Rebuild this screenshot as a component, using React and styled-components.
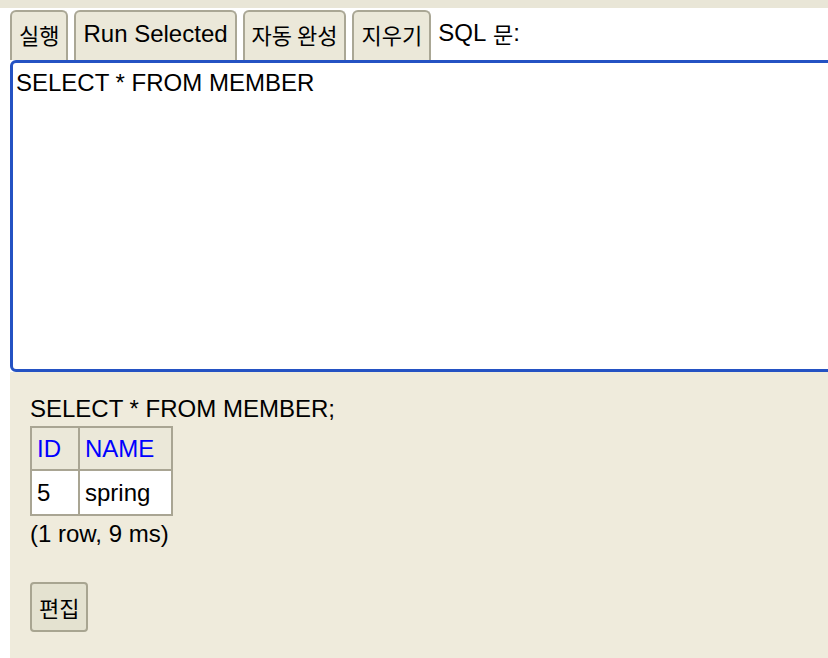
import React from 'react';
import styled, { createGlobalStyle } from 'styled-components';

const GlobalStyle = createGlobalStyle`
  html, body {
    margin: 0;
    padding: 0;
    background: #ffffff;
    overflow: hidden;
  }
  body {
    font-family: "Liberation Sans", "Noto Sans CJK KR", Arial, sans-serif;
    color: #000;
  }
`;

const Page = styled.div`
  width: 828px;
  height: 658px;
  display: flex;
  flex-direction: column;
`;

const TopStrip = styled.div`
  height: 8px;
  background: #e9e6d7;
`;

const Main = styled.div`
  flex: 1;
  display: flex;
  flex-direction: column;
  padding-left: 10px;
  padding-top: 2px;
`;

const Toolbar = styled.div`
  display: flex;
  align-items: stretch;
  gap: 6px;
  height: 50px;
`;

const Ko = styled.span`
  font-family: "Noto Sans CJK KR", sans-serif;
  font-size: 22px;
`;

const ToolButton = styled.button`
  font-family: "Liberation Sans", "Noto Sans CJK KR", sans-serif;
  font-size: 24px;
  color: #000;
  background: #ebe8d9;
  border: 2px solid #aaa795;
  border-bottom: none;
  border-radius: 6px 6px 0 0;
  padding: 0 7px 4px;
  margin: 0;
  cursor: pointer;
`;

const Label = styled.span`
  display: flex;
  align-items: center;
  font-size: 24px;
  padding-bottom: 4px;
  margin-left: 1px;
`;

const Editor = styled.textarea`
  box-sizing: border-box;
  width: 840px;
  height: 312px;
  border: 3px solid #2452c3;
  border-radius: 6px;
  outline: none;
  resize: none;
  margin: 0;
  padding: 6px 3px;
  font-family: "Liberation Sans", Arial, sans-serif;
  font-size: 24px;
  line-height: 27px;
  color: #000;
  background: #fff;
`;

const Result = styled.div`
  flex: 1;
  background: #efebdc;
  padding: 23px 20px 0;
  font-size: 24px;
  line-height: 27px;
`;

const Statement = styled.div`
  margin-bottom: 4px;
`;

const Table = styled.table`
  border-collapse: collapse;
  border: 2px solid #a9a593;
`;

const Cell = styled.td`
  border: 2px solid #a9a593;
  padding: ${p => (p.$head ? '7px 17px 7px 5px' : '8px 17px 8px 5px')};
  background: ${p => (p.$head ? '#ebe8d9' : '#ffffff')};
  color: ${p => (p.$head ? '#0000ff' : '#000')};
  font-weight: normal;
  text-align: left;
`;

const Summary = styled.div`
  margin-top: 4px;
`;

const EditButton = styled.button`
  margin-top: 35px;
  font-family: "Noto Sans CJK KR", sans-serif;
  font-size: 22px;
  background: #e4e2d0;
  border: 2px solid #a8a591;
  border-radius: 4px;
  height: 50px;
  padding: 0 7px;
  color: #000;
`;

export default function App() {
  return (
    <Page>
      <GlobalStyle />
      <TopStrip />
      <Main>
        <Toolbar>
          <ToolButton><Ko>실행</Ko></ToolButton>
          <ToolButton>Run Selected</ToolButton>
          <ToolButton><Ko>자동 완성</Ko></ToolButton>
          <ToolButton><Ko>지우기</Ko></ToolButton>
          <Label>SQL&nbsp;<Ko>문</Ko>:</Label>
        </Toolbar>
        <Editor defaultValue="SELECT * FROM MEMBER" spellCheck={false} />
        <Result>
          <Statement>SELECT * FROM MEMBER;</Statement>
          <Table>
            <tbody>
              <tr>
                <Cell as="th" $head>ID</Cell>
                <Cell as="th" $head>NAME</Cell>
              </tr>
              <tr>
                <Cell>5</Cell>
                <Cell>spring</Cell>
              </tr>
            </tbody>
          </Table>
          <Summary>(1 row, 9 ms)</Summary>
          <div>
            <EditButton>편집</EditButton>
          </div>
        </Result>
      </Main>
    </Page>
  );
}
